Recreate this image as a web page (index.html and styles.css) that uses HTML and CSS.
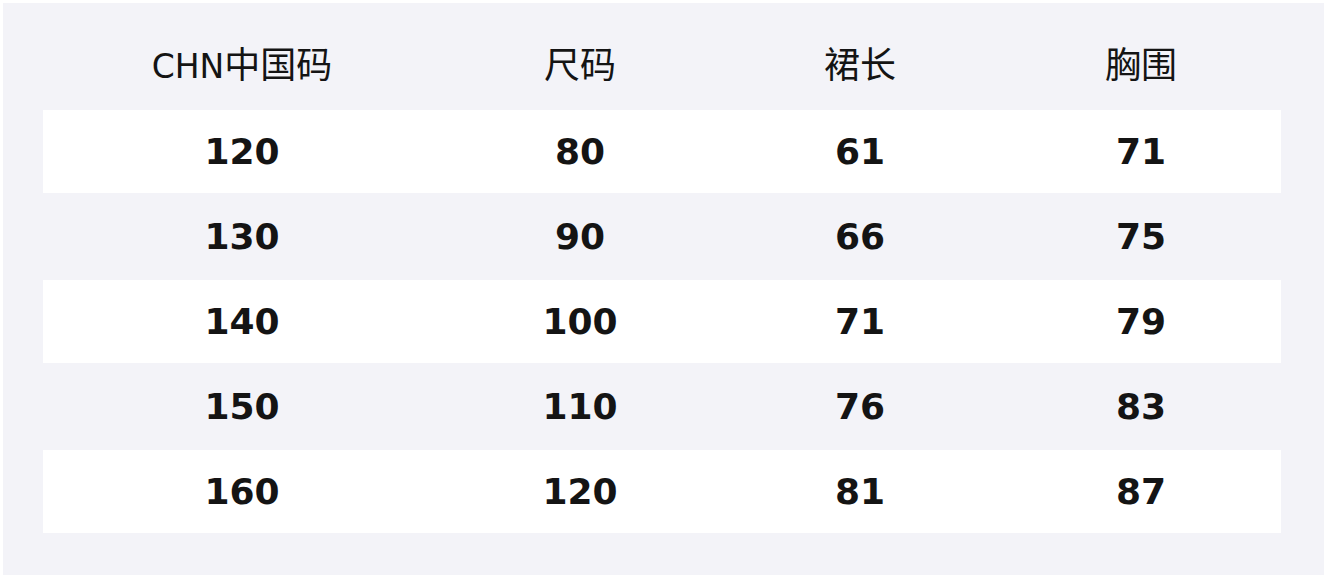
FILE: index.html
```html
<!DOCTYPE html>
<html lang="zh">
<head>
<meta charset="utf-8">
<title>尺码表</title>
<link rel="stylesheet" href="styles.css">
</head>
<body>
<div class="panel">
  <div class="table">
    <div class="row head">
      <div class="cell"><span class="latin">CHN</span>中国码</div>
      <div class="cell">尺码</div>
      <div class="cell">裙长</div>
      <div class="cell">胸围</div>
    </div>
    <div class="row odd">
      <div class="cell">120</div><div class="cell">80</div><div class="cell">61</div><div class="cell">71</div>
    </div>
    <div class="row even">
      <div class="cell">130</div><div class="cell">90</div><div class="cell">66</div><div class="cell">75</div>
    </div>
    <div class="row odd">
      <div class="cell">140</div><div class="cell">100</div><div class="cell">71</div><div class="cell">79</div>
    </div>
    <div class="row even">
      <div class="cell">150</div><div class="cell">110</div><div class="cell">76</div><div class="cell">83</div>
    </div>
    <div class="row odd">
      <div class="cell">160</div><div class="cell">120</div><div class="cell">81</div><div class="cell">87</div>
    </div>
  </div>
</div>
</body>
</html>
```

FILE: styles.css
```css
html, body {
  margin: 0;
  background: #ffffff;
}
body {
  padding: 3px 0 3px 3px;
  width: 1324px;
  height: 578px;
  box-sizing: border-box;
  overflow: hidden;
  font-family: "DejaVu Sans", "Noto Sans CJK SC", sans-serif;
  color: #141414;
}
.panel {
  background: #f3f3f8;
  height: 572px;
  box-sizing: border-box;
  padding: 20px 43px 42px 40px;
}
.table {
  display: flex;
  flex-direction: column;
}
.row {
  display: grid;
  grid-template-columns: 398px 278px 282px 280px;
  align-items: center;
}
.cell {
  text-align: center;
}
.head {
  height: 87px;
  font-size: 36px;
  line-height: 36px;
  font-weight: normal;
  padding-bottom: 1px;
  box-sizing: border-box;
}
.latin {
  font-size: 33px;
}
.odd, .even {
  font-size: 36px;
  font-weight: bold;
}
.odd {
  height: 83px;
  background: #ffffff;
}
.even {
  height: 87px;
}
```
